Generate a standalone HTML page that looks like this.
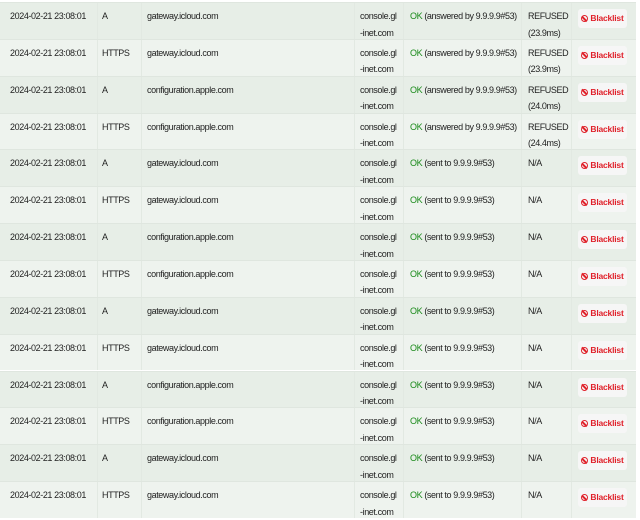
<!DOCTYPE html>
<html><head><style>
body{margin:0;width:640px;height:500px;overflow:hidden;background:#fff;font-family:"Liberation Sans",sans-serif;font-size:9px;color:#222}
.r{position:absolute;left:0;width:636px;height:36.85px;border-top:1px solid #dfe6df;box-sizing:border-box}
.r:nth-child(odd){background:#e7eee7}
.r:nth-child(even){background:#eef3ee}
.c{position:absolute;top:5px;line-height:16.5px;white-space:nowrap;letter-spacing:-0.4px}
.v{position:absolute;top:0;bottom:0;width:1px;background:#e2e9e2}
.ok{color:#1a8a1a}
.b{position:absolute;left:578px;top:6px;width:49px;height:19px;background:#f6f6f6;border-radius:3px;color:#e0202a;font-size:8.5px;font-weight:bold;line-height:19px;text-align:center;letter-spacing:-0.2px}
.b span{display:inline-block;width:7px;height:7px;border:1.5px solid #e0202a;border-radius:50%;position:relative;vertical-align:-1px;margin-right:2px;box-sizing:border-box}
.b span:after{content:"";position:absolute;left:-1px;top:1.5px;width:7px;height:1.5px;background:#e0202a;transform:rotate(45deg)}
</style></head><body>
<script>
var d=[["A","gateway.icloud.com","(answered by 9.9.9.9#53)","REFUSED<br>(23.9ms)"],["HTTPS","gateway.icloud.com","(answered by 9.9.9.9#53)","REFUSED<br>(23.9ms)"],["A","configuration.apple.com","(answered by 9.9.9.9#53)","REFUSED<br>(24.0ms)"],["HTTPS","configuration.apple.com","(answered by 9.9.9.9#53)","REFUSED<br>(24.4ms)"]];
var s=["gateway.icloud.com","gateway.icloud.com","configuration.apple.com","configuration.apple.com"];
for(var i=4;i<14;i++){d.push([i%2?"HTTPS":"A",s[i%4],"(sent to 9.9.9.9#53)","N/A"]);}
var h="";
d.forEach(function(r,i){
h+='<div class="r" style="top:'+(2+i*36.85)+'px">'+
'<div class="v" style="left:97px"></div><div class="v" style="left:141px"></div><div class="v" style="left:354px"></div><div class="v" style="left:403px"></div><div class="v" style="left:521px"></div><div class="v" style="left:571px"></div>'+
'<div class="c" style="left:10px">2024-02-21 23:08:01</div>'+
'<div class="c" style="left:102px">'+r[0]+'</div>'+
'<div class="c" style="left:147px">'+r[1]+'</div>'+
'<div class="c" style="left:360px">console.gl<br>-inet.com</div>'+
'<div class="c" style="left:410px"><span class="ok">OK</span> '+r[2]+'</div>'+
'<div class="c" style="left:528px">'+r[3]+'</div>'+
'<div class="b"><span></span>Blacklist</div></div>';});
document.body.innerHTML=h;
</script>
</body></html>
